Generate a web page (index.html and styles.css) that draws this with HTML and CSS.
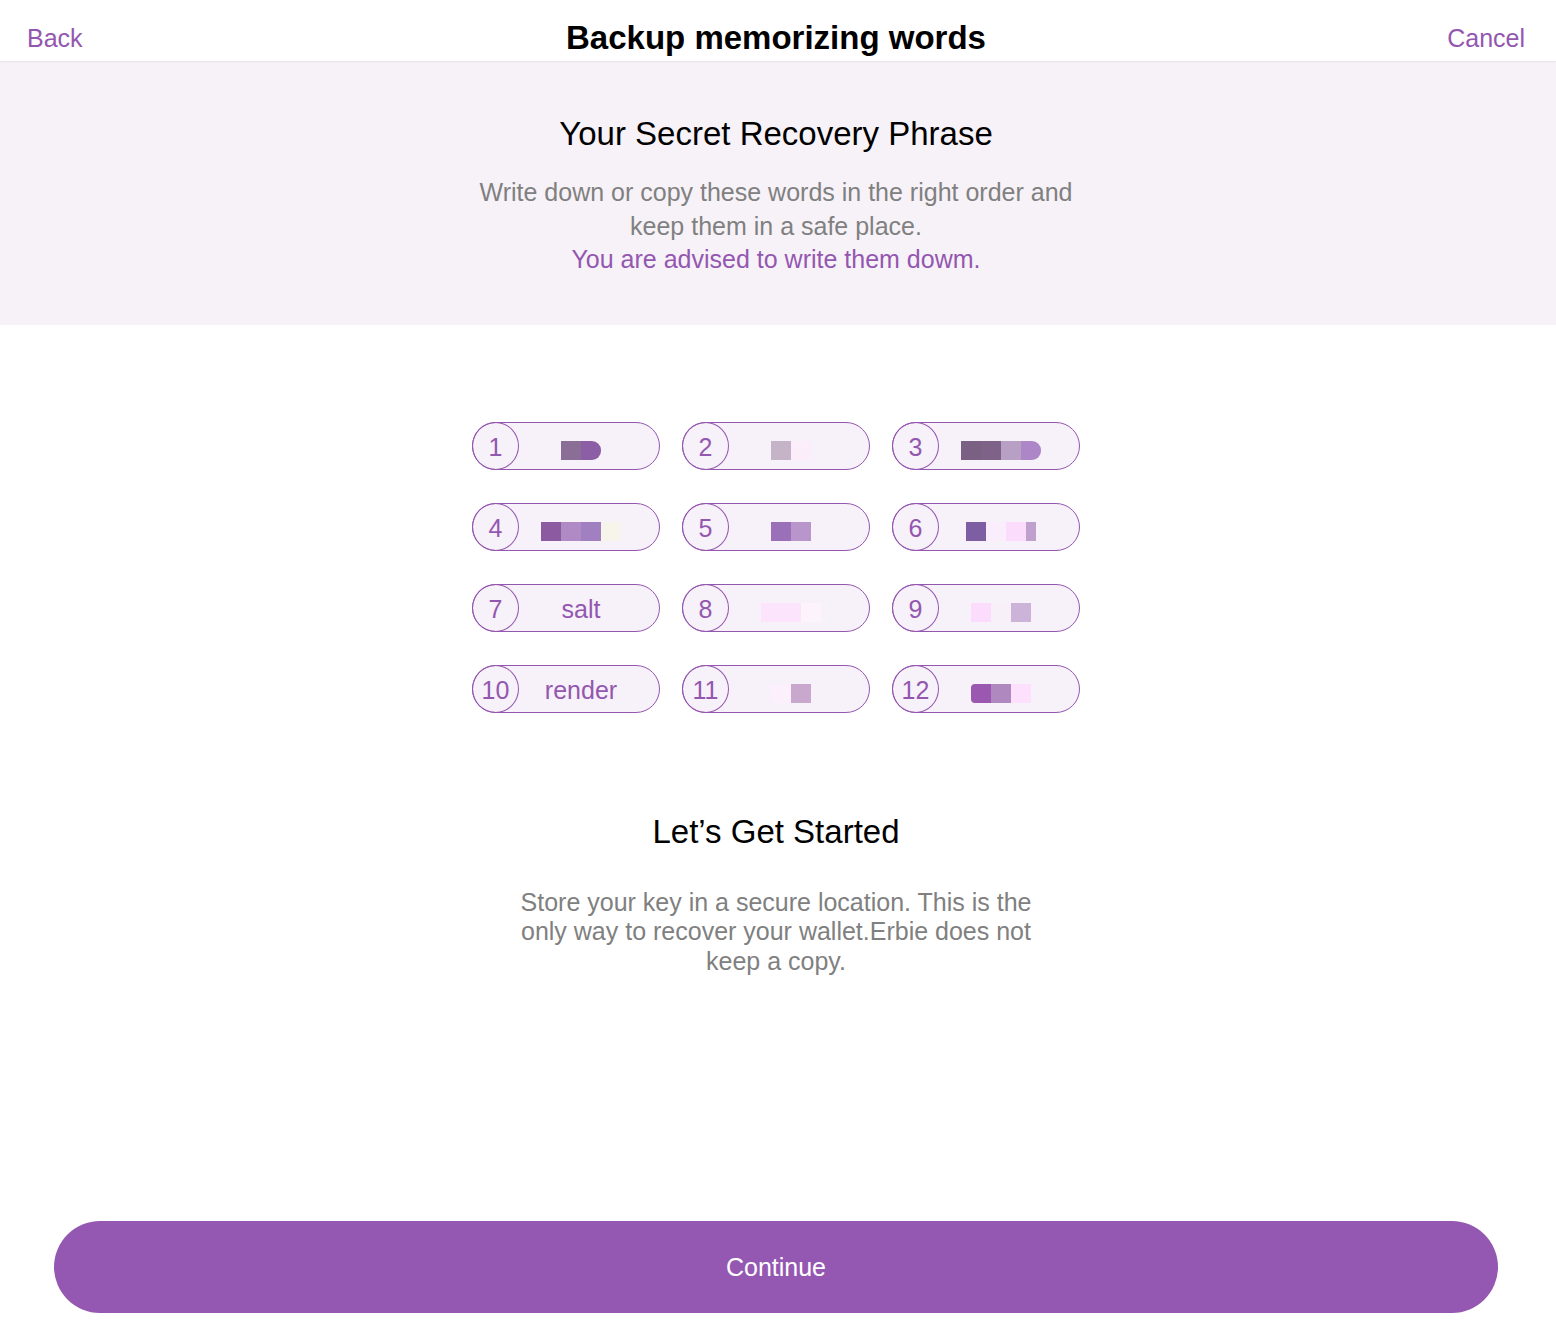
FILE: index.html
```html
<!DOCTYPE html>
<html lang="en">
<head>
<meta charset="utf-8">
<title>Backup memorizing words</title>
<link rel="stylesheet" href="styles.css">
</head>
<body>
<div class="page">
  <header class="topbar">
    <a class="nav-link back">Back</a>
    <h1 class="title">Backup memorizing words</h1>
    <a class="nav-link cancel">Cancel</a>
  </header>

  <section class="intro">
    <h2 class="intro-title">Your Secret Recovery Phrase</h2>
    <p class="intro-text">Write down or copy these words in the right order and<br>keep them in a safe place.<br><span class="accent">You are advised to write them dowm.</span></p>
  </section>

  <section class="words">
    <div class="pill"><span class="num">1</span><span class="word"><span class="mosaic"><i class="b" style="background:#8a6e96"></i><i class="b r" style="background:#8b5ea6"></i></span></span></div>
    <div class="pill"><span class="num">2</span><span class="word"><span class="mosaic"><i class="b" style="background:#c5b3c8"></i><i class="b" style="background:#fbeefa"></i></span></span></div>
    <div class="pill"><span class="num">3</span><span class="word"><span class="mosaic"><i class="b" style="background:#7a6082"></i><i class="b" style="background:#7e6288"></i><i class="b" style="background:#b8a0c4"></i><i class="b r" style="background:#ad86c8"></i></span></span></div>
    <div class="pill"><span class="num">4</span><span class="word"><span class="mosaic"><i class="b" style="background:#8c5aa0"></i><i class="b" style="background:#b08ac4"></i><i class="b" style="background:#a080c0"></i><i class="b" style="background:#f5f5ec"></i></span></span></div>
    <div class="pill"><span class="num">5</span><span class="word"><span class="mosaic"><i class="b" style="background:#9a70b8"></i><i class="b" style="background:#b896cc"></i></span></span></div>
    <div class="pill"><span class="num">6</span><span class="word"><span class="mosaic"><i class="b" style="background:#7e5ea2"></i><i class="b" style="background:#fbeefc"></i><i class="b" style="background:#fcdcfc"></i><i class="b half" style="background:#c0a0cc"></i></span></span></div>
    <div class="pill"><span class="num">7</span><span class="word">salt</span></div>
    <div class="pill"><span class="num">8</span><span class="word"><span class="mosaic"><i class="b" style="background:#fce4fc"></i><i class="b" style="background:#fce4fc"></i><i class="b" style="background:#fdf3fd"></i></span></span></div>
    <div class="pill"><span class="num">9</span><span class="word"><span class="mosaic"><i class="b" style="background:#fcdcfc"></i><i class="b" style="background:#f8f0f8"></i><i class="b" style="background:#ccb4d8"></i></span></span></div>
    <div class="pill"><span class="num">10</span><span class="word">render</span></div>
    <div class="pill"><span class="num">11</span><span class="word"><span class="mosaic"><i class="b" style="background:#fcf0fc"></i><i class="b" style="background:#c8a8cc"></i></span></span></div>
    <div class="pill"><span class="num">12</span><span class="word"><span class="mosaic"><i class="b l" style="background:#9a58b0"></i><i class="b" style="background:#b088c0"></i><i class="b" style="background:#fce0fc"></i></span></span></div>
  </section>

  <section class="started">
    <h2 class="started-title">Let’s Get Started</h2>
    <p class="started-text">Store your key in a secure location. This is the only way to recover your wallet.Erbie does not keep a copy.</p>
  </section>

  <div class="footer">
    <button class="continue">Continue</button>
  </div>
</div>
</body>
</html>
```

FILE: styles.css
```css
* { box-sizing: border-box; }
html, body { margin: 0; padding: 0; }
body {
  font-family: "Liberation Sans", Arial, Helvetica, sans-serif;
  background: #ffffff;
  color: #000;
}
.page {
  width: 1556px;
  height: 1338px;
  padding-right: 4px;
  display: flex;
  flex-direction: column;
}
.topbar {
  height: 61px;
  margin-right: -4px;
  display: grid;
  grid-template-columns: 1fr auto 1fr;
  align-items: center;
  padding: 14px 31px 0 27px;
  background: #fff;
  box-shadow: 0 1px 2px rgba(0,0,0,0.07);
  position: relative;
  z-index: 1;
}
.nav-link {
  color: #9457b0;
  font-size: 25px;
  line-height: 30px;
}
.back { justify-self: start; }
.cancel { justify-self: end; }
.title {
  margin: 0;
  font-size: 33px;
  font-weight: bold;
  line-height: 38px;
}
.intro {
  background: #f7f2f8;
  margin-right: -4px;
  padding: 54px 4px 48px 0;
  text-align: center;
}
.intro-title {
  margin: 0;
  font-size: 33px;
  font-weight: normal;
  line-height: 38px;
}
.intro-text {
  margin: 23px 0 0;
  font-size: 25px;
  line-height: 33.5px;
  color: #808080;
}
.accent { color: #9457b0; }

.words {
  margin: 97px auto 0;
  display: grid;
  grid-template-columns: repeat(3, 188px);
  column-gap: 22px;
  row-gap: 33px;
}
.pill {
  height: 48px;
  border: 1px solid #9457b0;
  border-radius: 24px;
  background: #f7f1f9;
  display: flex;
  align-items: center;
}
.num {
  width: 47px;
  height: 48px;
  margin: -1px 0 -1px -1px;
  padding-top: 3px;
  border: 1px solid #9457b0;
  border-radius: 50%;
  display: flex;
  align-items: center;
  justify-content: center;
  font-size: 25px;
  color: #9457b0;
  flex: none;
}
.word {
  flex: 1;
  height: 46px;
  padding-top: 3px;
  text-align: center;
  font-size: 25px;
  color: #9457b0;
  padding-right: 16px;
  display: flex;
  justify-content: center;
  align-items: center;
}
.mosaic {
  display: flex;
  margin-top: 7px;
}
.b {
  display: block;
  width: 20px;
  height: 19px;
}
.b.half { width: 10px; }
.b.r { border-radius: 0 9px 9px 0; }
.b.l { border-radius: 4px 0 0 4px; }

.started {
  margin-top: 100px;
  text-align: center;
}
.started-title {
  margin: 0;
  font-size: 33px;
  font-weight: normal;
  line-height: 38px;
}
.started-text {
  width: 540px;
  margin: 37px auto 0;
  font-size: 25px;
  line-height: 29.5px;
  color: #808080;
}
.footer {
  margin-top: auto;
  padding: 0 54px 25px 54px;
}
.continue {
  width: 100%;
  height: 92px;
  border: none;
  border-radius: 46px;
  background: #9558b2;
  color: #fff;
  font-family: "Liberation Sans", Arial, Helvetica, sans-serif;
  font-size: 25px;
}
```
